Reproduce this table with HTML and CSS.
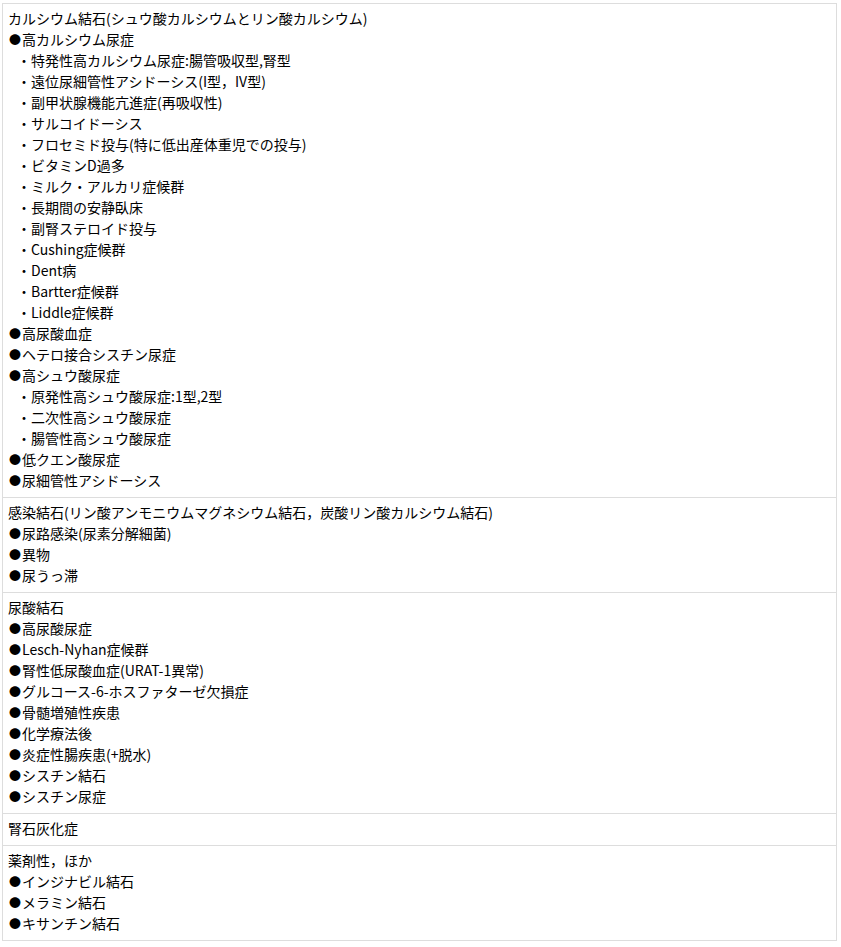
FILE: index.html
```html
<!DOCTYPE html>
<html lang="ja">
<head>
  <meta charset="UTF-8">
  <meta name="viewport" content="width=device-width, initial-scale=1.0">
  <title>尿路結石の原因</title>
  <link rel="stylesheet" href="styles.css">
</head>
<body>

  <table class="causes">
    <!-- カルシウム結石 -->
    <tr>
      <td>
        <div class="title">カルシウム結石(シュウ酸カルシウムとリン酸カルシウム)</div>
        <ul class="main">
          <li><span class="dot">●</span>高カルシウム尿症
            <ul class="sub">
              <li>・特発性高カルシウム尿症:腸管吸収型,腎型</li>
              <li>・遠位尿細管性アシドーシス(I型，IV型)</li>
              <li>・副甲状腺機能亢進症(再吸収性)</li>
              <li>・サルコイドーシス</li>
              <li>・フロセミド投与(特に低出産体重児での投与)</li>
              <li>・ビタミンD過多</li>
              <li>・ミルク・アルカリ症候群</li>
              <li>・長期間の安静臥床</li>
              <li>・副腎ステロイド投与</li>
              <li>・Cushing症候群</li>
              <li>・Dent病</li>
              <li>・Bartter症候群</li>
              <li>・Liddle症候群</li>
            </ul>
          </li>
          <li><span class="dot">●</span>高尿酸血症</li>
          <li><span class="dot">●</span>ヘテロ接合シスチン尿症</li>
          <li><span class="dot">●</span>高シュウ酸尿症
            <ul class="sub">
              <li>・原発性高シュウ酸尿症:1型,2型</li>
              <li>・二次性高シュウ酸尿症</li>
              <li>・腸管性高シュウ酸尿症</li>
            </ul>
          </li>
          <li><span class="dot">●</span>低クエン酸尿症</li>
          <li><span class="dot">●</span>尿細管性アシドーシス</li>
        </ul>
      </td>
    </tr>

    <!-- 感染結石 -->
    <tr>
      <td>
        <div class="title">感染結石(リン酸アンモニウムマグネシウム結石，炭酸リン酸カルシウム結石)</div>
        <ul class="main">
          <li><span class="dot">●</span>尿路感染(尿素分解細菌)</li>
          <li><span class="dot">●</span>異物</li>
          <li><span class="dot">●</span>尿うっ滞</li>
        </ul>
      </td>
    </tr>

    <!-- 尿酸結石 -->
    <tr>
      <td>
        <div class="title">尿酸結石</div>
        <ul class="main">
          <li><span class="dot">●</span>高尿酸尿症</li>
          <li><span class="dot">●</span>Lesch-Nyhan症候群</li>
          <li><span class="dot">●</span>腎性低尿酸血症(URAT-1異常)</li>
          <li><span class="dot">●</span>グルコース-6-ホスファターゼ欠損症</li>
          <li><span class="dot">●</span>骨髄増殖性疾患</li>
          <li><span class="dot">●</span>化学療法後</li>
          <li><span class="dot">●</span>炎症性腸疾患(+脱水)</li>
          <li><span class="dot">●</span>シスチン結石</li>
          <li><span class="dot">●</span>シスチン尿症</li>
        </ul>
      </td>
    </tr>

    <tr>
      <td>
        <div class="title">腎石灰化症</div>
      </td>
    </tr>

    <!-- 薬剤性 -->
    <tr>
      <td>
        <div class="title">薬剤性，ほか</div>
        <ul class="main">
          <li><span class="dot">●</span>インジナビル結石</li>
          <li><span class="dot">●</span>メラミン結石</li>
          <li><span class="dot">●</span>キサンチン結石</li>
        </ul>
      </td>
    </tr>
  </table>

</body>
</html>
```

FILE: styles.css
```css
/* Global Styles */
body {
  font-family: "Noto Sans CJK JP", "Noto Sans", sans-serif;
  font-size: 14px;
  line-height: 21px;
  color: #000;
  background-color: #fff;
  margin: 3px 4px 0 2px;
  padding: 0;
}

.causes {
  width: 100%;
  border-collapse: collapse;
  border: 1px solid #ddd;
}

.causes td {
  border: 1px solid #ddd;
  padding: 4px 5px 6px 5px;
  vertical-align: top;
}

ul {
  list-style: none;
  margin: 0;
  padding: 0;
}

.dot {
  display: inline-block;
  width: 13px;
  padding-left: 1px;
  font-size: 12px;
  line-height: 1;
}

.sub {
  padding-left: 9px;
}
```
